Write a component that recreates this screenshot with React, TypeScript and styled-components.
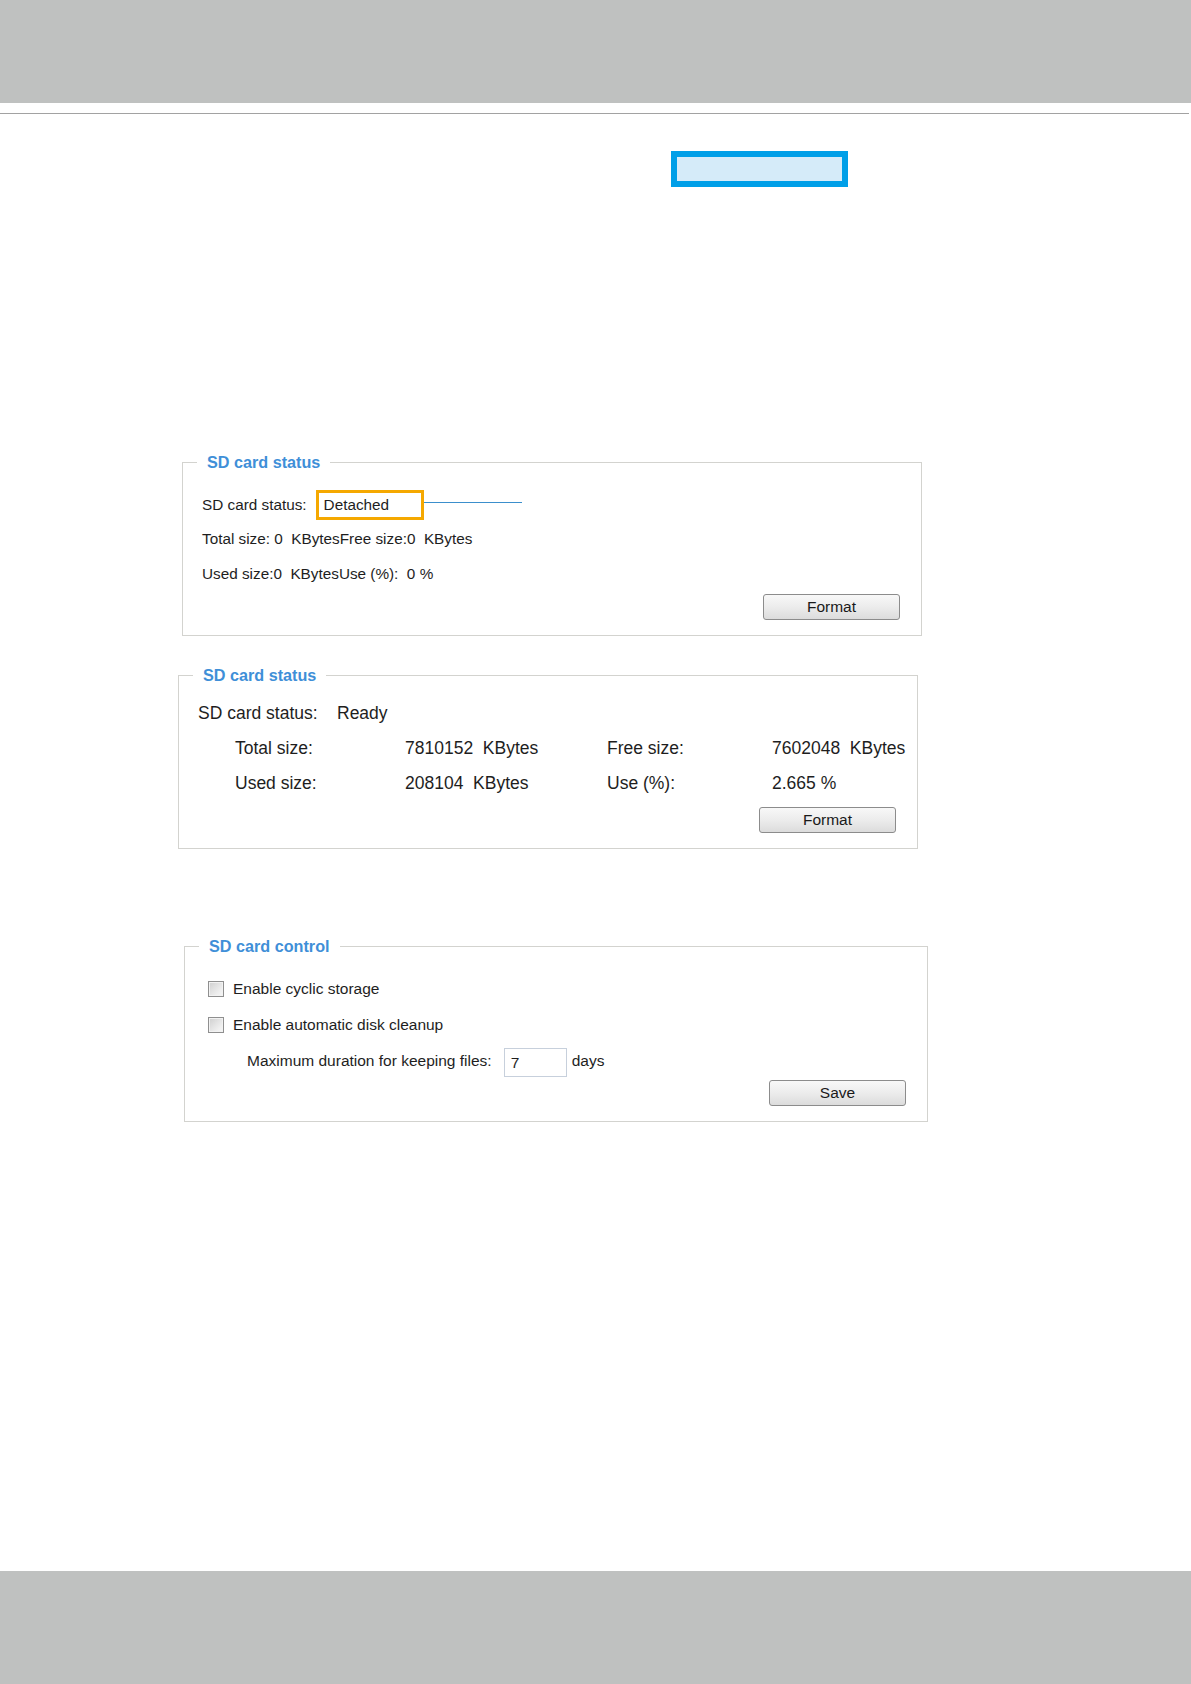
import React from "react";
import styled, { createGlobalStyle } from "styled-components";

const GlobalStyle = createGlobalStyle`
  html, body {
    margin: 0;
    padding: 0;
    background: #ffffff;
  }
  body {
    font-family: "Liberation Sans", Arial, sans-serif;
    color: #1e1e1e;
  }
`;

const Page = styled.div`
  display: flex;
  flex-direction: column;
  min-height: 1684px;
  width: 1191px;
`;

const HeaderBand = styled.div`
  height: 103px;
  background: #bfc1c0;
`;

const Rule = styled.div`
  width: 1189px;
  height: 1px;
  margin-top: 10px;
  background: #a2a2a2;
`;

const Highlight = styled.div`
  box-sizing: border-box;
  width: 177px;
  height: 36px;
  margin: 37px 0 0 671px;
  border: 6px solid #009fe8;
  background: #d5ebf9;
`;

const Panel = styled.fieldset<{ $offset: number; $width: number; $gap: number }>`
  box-sizing: border-box;
  width: ${(p) => p.$width}px;
  margin: ${(p) => p.$gap}px 0 0 ${(p) => p.$offset}px;
  padding: 0;
  border: 1px solid #d3d3cf;
  min-inline-size: 0;
`;

const Legend = styled.legend`
  margin-left: 14px;
  padding: 0 10px;
  font-size: 16.2px;
  line-height: 20px;
  font-weight: bold;
  color: #3f8fd8;
`;

const PanelBody = styled.div<{ $pad: string; $size: number }>`
  padding: ${(p) => p.$pad};
  font-size: ${(p) => p.$size}px;
  display: flex;
  flex-direction: column;
`;

const Row = styled.div<{ $height: number; $indent?: number }>`
  display: flex;
  align-items: center;
  height: ${(p) => p.$height}px;
  padding-left: ${(p) => p.$indent ?? 0}px;
  white-space: pre;
`;

const StatusBox = styled.span`
  box-sizing: border-box;
  display: inline-flex;
  align-items: center;
  width: 108px;
  height: 30px;
  margin-left: 9px;
  padding-left: 5px;
  border: 3px solid #f5a800;
`;

const Callout = styled.span`
  width: 98px;
  height: 1px;
  margin-bottom: 6px;
  background: #3b8fcc;
`;

const Grid = styled.div<{ $cols: string; $indent: number }>`
  display: grid;
  grid-template-columns: ${(p) => p.$cols};
  grid-auto-rows: 35px;
  align-items: center;
  padding-left: ${(p) => p.$indent}px;
  white-space: pre;
`;

const ButtonRow = styled.div<{ $top: number }>`
  display: flex;
  justify-content: flex-end;
  margin-top: ${(p) => p.$top}px;
`;

const Button = styled.button`
  box-sizing: border-box;
  width: 137px;
  height: 26px;
  padding: 0;
  border: 1px solid #8c8c8c;
  border-radius: 3px;
  background: linear-gradient(#f8f8f8, #ececec 50%, #dcdcdc);
  font-family: "Liberation Sans", Arial, sans-serif;
  font-size: 15.5px;
  color: #1a1a1a;
`;

const CheckBox = styled.span`
  box-sizing: border-box;
  width: 16px;
  height: 16px;
  margin-right: 9px;
  border: 1px solid #8f8f8f;
  box-shadow: inset 0 0 0 1px #f2f2f2;
  background: linear-gradient(135deg, #cfcfcf, #eeeeee 70%, #f6f6f6);
`;

const DaysInput = styled.span`
  box-sizing: border-box;
  display: inline-flex;
  align-items: center;
  width: 63px;
  height: 29px;
  margin: 3px 5px 0 12px;
  padding-left: 6px;
  border: 1px solid #c7d0dc;
`;

const FooterBand = styled.div`
  margin-top: auto;
  height: 113px;
  background: #bfc1c0;
`;

const App = () => {
  return (
    <Page>
      <GlobalStyle />
      <HeaderBand />
      <Rule />
      <Highlight />

      <Panel $offset={182} $width={740} $gap={265}>
        <Legend>SD card status</Legend>
        <PanelBody $pad="17px 21px 15px 19px" $size={15.3}>
          <Row $height={32}>
            SD card status:
            <StatusBox>Detached</StatusBox>
            <Callout />
          </Row>
          <Row $height={35}>{"Total size: 0\u00a0\u00a0KBytesFree size:0\u00a0\u00a0KBytes"}</Row>
          <Row $height={35}>{"Used size:0\u00a0\u00a0KBytesUse (%):\u00a0\u00a00 %"}</Row>
          <ButtonRow $top={3}>
            <Button>Format</Button>
          </ButtonRow>
        </PanelBody>
      </Panel>

      <Panel $offset={178} $width={740} $gap={29}>
        <Legend>SD card status</Legend>
        <PanelBody $pad="11px 21px 15px 19px" $size={17.5}>
          <Grid $cols="139px auto" $indent={0}>
            <span>SD card status:</span>
            <span>Ready</span>
          </Grid>
          <Grid $cols="170px 202px 165px auto" $indent={37}>
            <span>Total size:</span>
            <span>{"7810152\u00a0\u00a0KBytes"}</span>
            <span>Free size:</span>
            <span>{"7602048\u00a0\u00a0KBytes"}</span>
            <span>Used size:</span>
            <span>{"208104\u00a0\u00a0KBytes"}</span>
            <span>Use (%):</span>
            <span>2.665 %</span>
          </Grid>
          <ButtonRow $top={6}>
            <Button>Format</Button>
          </ButtonRow>
        </PanelBody>
      </Panel>

      <Panel $offset={184} $width={744} $gap={87}>
        <Legend>SD card control</Legend>
        <PanelBody $pad="15px 21px 15px 23px" $size={15.5}>
          <Row $height={36}>
            <CheckBox />
            Enable cyclic storage
          </Row>
          <Row $height={36}>
            <CheckBox />
            Enable automatic disk cleanup
          </Row>
          <Row $height={36} $indent={39}>
            Maximum duration for keeping files:
            <DaysInput>7</DaysInput>
            days
          </Row>
          <ButtonRow $top={1}>
            <Button>Save</Button>
          </ButtonRow>
        </PanelBody>
      </Panel>

      <FooterBand />
    </Page>
  );
};

export default App;
